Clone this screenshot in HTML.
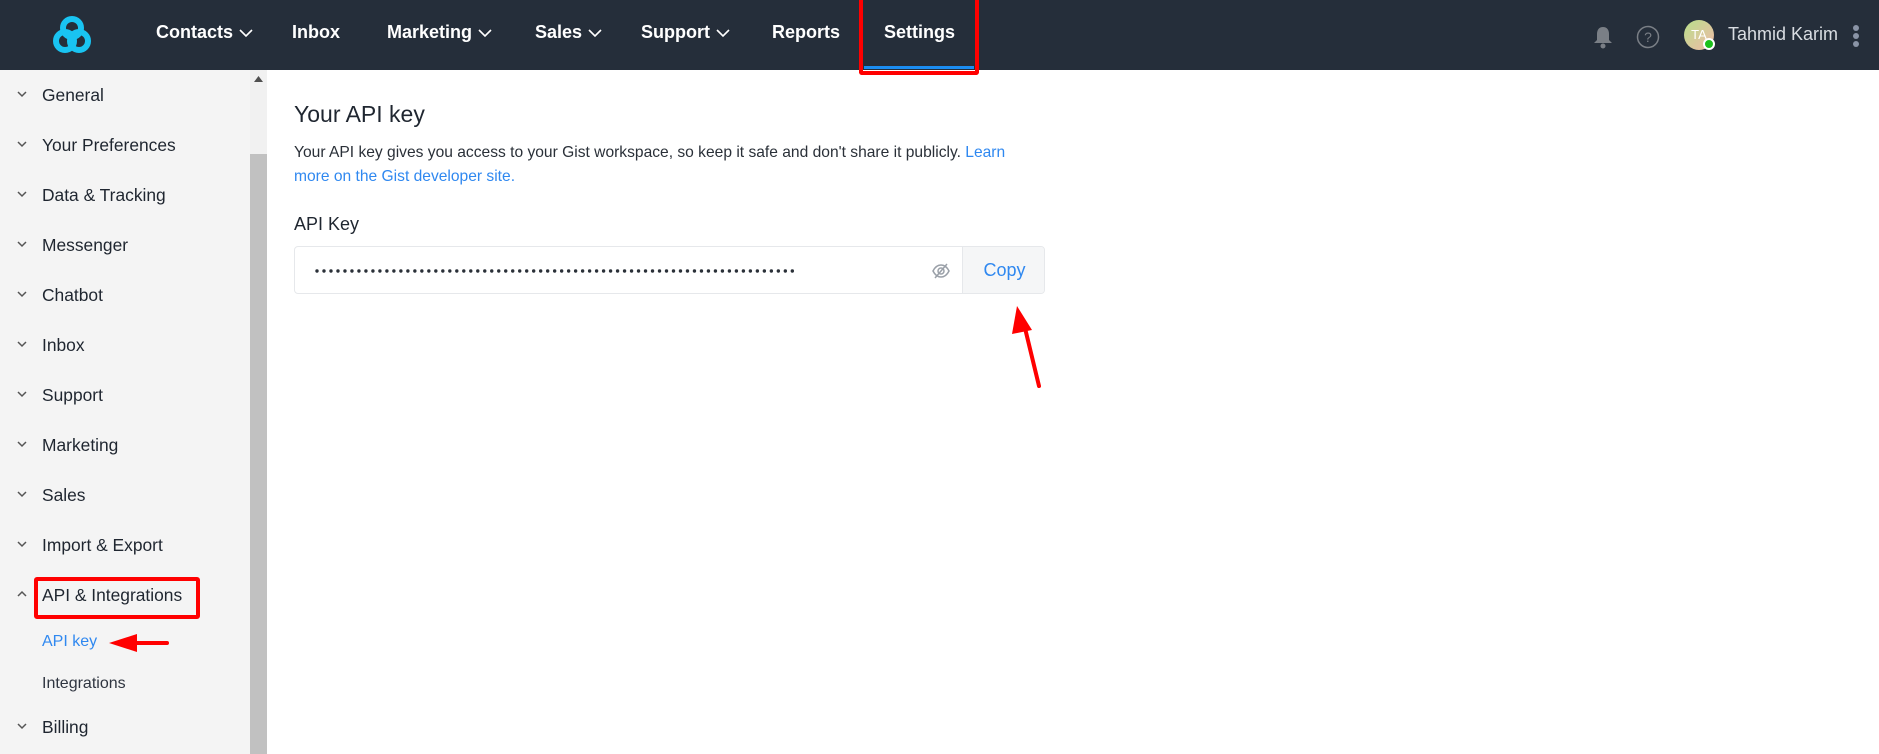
<!DOCTYPE html>
<html><head><meta charset="utf-8"><style>
*{margin:0;padding:0;box-sizing:border-box}
body{width:1879px;height:754px;overflow:hidden;background:#fff;font-family:"Liberation Sans",sans-serif;position:relative}
.nav{position:absolute;left:0;top:0;width:1879px;height:70px;background:#252e3a}
.ni{position:absolute;top:22px;color:#fff;font-size:18px;font-weight:bold;white-space:nowrap}
.ni svg{vertical-align:middle;margin-left:6px}
.side{position:absolute;left:0;top:70px;width:250px;height:684px;background:#f4f4f4}
.si{position:absolute;left:42px;font-size:17.4px;color:#1f2630;white-space:nowrap}
.sb{position:absolute;left:250px;top:70px;width:17px;height:684px;background:#f1f1f1}
.thumb{position:absolute;left:250px;top:154px;width:17px;height:600px;background:#c1c1c1}
</style></head><body>
<div class="nav">
<svg style="position:absolute;left:50px;top:14px" width="44" height="42" viewBox="0 0 44 42"><g fill="none" stroke="#19c4f2" stroke-width="6"><circle cx="22" cy="14" r="9"/><circle cx="15" cy="27" r="9"/><circle cx="29" cy="27" r="9"/></g></svg>
<div class="ni" style="left:156px">Contacts<svg width="14" height="9"><path d="M1 1l6 6 6-6" stroke="#fff" stroke-width="1.6" fill="none"/></svg></div>
<div class="ni" style="left:292px">Inbox</div>
<div class="ni" style="left:387px">Marketing<svg width="14" height="9"><path d="M1 1l6 6 6-6" stroke="#fff" stroke-width="1.6" fill="none"/></svg></div>
<div class="ni" style="left:535px">Sales<svg width="14" height="9"><path d="M1 1l6 6 6-6" stroke="#fff" stroke-width="1.6" fill="none"/></svg></div>
<div class="ni" style="left:641px">Support<svg width="14" height="9"><path d="M1 1l6 6 6-6" stroke="#fff" stroke-width="1.6" fill="none"/></svg></div>
<div class="ni" style="left:772px">Reports</div>
<div class="ni" style="left:884px">Settings</div>
<div style="position:absolute;left:864px;top:66px;width:110px;height:3px;background:#1b8df2"></div>
<div style="position:absolute;left:859px;top:0;width:120px;height:75px;border:4px solid #f00;border-top:0;border-radius:0 0 3px 3px"></div>
<svg style="position:absolute;left:1592px;top:25px" width="22" height="24" viewBox="0 0 22 24"><path d="M11 2c-4 0-6 3-6 7v6l-3 3h18l-3-3V9c0-4-2-7-6-7z" fill="#7a7f86"/><circle cx="11" cy="21" r="2.5" fill="#7a7f86"/></svg>
<svg style="position:absolute;left:1636px;top:25px" width="24" height="24"><circle cx="12" cy="12" r="10.5" fill="none" stroke="#7a7f86" stroke-width="1.5"/><text x="12" y="17" font-size="14" text-anchor="middle" fill="#7a7f86" font-family="Liberation Sans">?</text></svg>
<div style="position:absolute;left:1684px;top:20px;width:30px;height:30px;border-radius:50%;background:linear-gradient(135deg,#b8e08a,#f1b8a8);color:#fff;font-size:13px;line-height:30px;text-align:center">TA</div>
<div style="position:absolute;left:1703px;top:38px;width:12px;height:12px;border-radius:50%;background:#1bc01b;border:2px solid #fff"></div>
<div style="position:absolute;left:1728px;top:24px;color:#d9dde2;font-size:18px">Tahmid Karim</div>
<svg style="position:absolute;left:1852px;top:24px" width="8" height="24"><circle cx="4" cy="4" r="3" fill="#8a94a6"/><circle cx="4" cy="12" r="3" fill="#8a94a6"/><circle cx="4" cy="20" r="3" fill="#8a94a6"/></svg>
</div>
<div class="side">
<div class="si" style="top:15px">General</div>
<div class="si" style="top:65px">Your Preferences</div>
<div class="si" style="top:115px">Data &amp; Tracking</div>
<div class="si" style="top:165px">Messenger</div>
<div class="si" style="top:215px">Chatbot</div>
<div class="si" style="top:265px">Inbox</div>
<div class="si" style="top:315px">Support</div>
<div class="si" style="top:365px">Marketing</div>
<div class="si" style="top:415px">Sales</div>
<div class="si" style="top:465px">Import &amp; Export</div>
<div class="si" style="top:515px">API &amp; Integrations</div>
<div class="si" style="top:563px;font-size:16px;color:#2f88f0">API key</div>
<div class="si" style="top:605px;font-size:16px;color:#2f3540">Integrations</div>
<div class="si" style="top:647px">Billing</div>
<svg style="position:absolute;left:0;top:0" width="30" height="684">
<g fill="none" stroke="#555" stroke-width="1.5">
<path d="M18 22l4 4 4-4"/><path d="M18 72l4 4 4-4"/><path d="M18 122l4 4 4-4"/><path d="M18 172l4 4 4-4"/><path d="M18 222l4 4 4-4"/><path d="M18 272l4 4 4-4"/><path d="M18 322l4 4 4-4"/><path d="M18 372l4 4 4-4"/><path d="M18 422l4 4 4-4"/><path d="M18 472l4 4 4-4"/><path d="M18 526l4-4 4 4"/><path d="M18 654l4 4 4-4"/></g></svg>
<div style="position:absolute;left:34px;top:507px;width:166px;height:42px;border:4px solid #f00;border-radius:3px"></div>
<svg style="position:absolute;left:105px;top:562px" width="65" height="22"><path d="M28 11H62" stroke="#f00" stroke-width="4" stroke-linecap="round"/><path d="M4 11L32 2V20z" fill="#f00"/></svg>
</div>
<div class="sb"></div><div class="thumb"></div>
<svg style="position:absolute;left:254px;top:76px" width="9" height="6"><path d="M0 6L4.5 0 9 6z" fill="#505050"/></svg>
<div style="position:absolute;left:294px;top:101px;font-size:23px;color:#1f2630">Your API key</div>
<div style="position:absolute;left:294px;top:141px;width:740px;font-size:15.6px;line-height:24px;color:#2a3038">Your API key gives you access to your Gist workspace, so keep it safe and don't share it publicly. <span style="color:#2f88f0">Learn more on the Gist developer site.</span></div>
<div style="position:absolute;left:294px;top:214px;font-size:18px;color:#1f2630">API Key</div>
<div style="position:absolute;left:294px;top:246px;width:751px;height:48px;border:1px solid #e6e8eb;border-radius:4px;overflow:hidden">
<svg style="position:absolute;left:20px;top:21px" width="490" height="6"><line x1="2" y1="3" x2="484" y2="3" stroke="#2a3038" stroke-width="3.4" stroke-linecap="round" stroke-dasharray="0 6.99"/></svg>
<svg style="position:absolute;left:636px;top:14px" width="20" height="20" viewBox="0 0 20 20"><g fill="none" stroke="#9aa0a8" stroke-width="1.5"><path d="M2 10c2-4 5-6 8-6s6 2 8 6c-2 4-5 6-8 6s-6-2-8-6z"/><circle cx="10" cy="10" r="3"/><path d="M4 17L16 3"/></g></svg>
<div style="position:absolute;left:667px;top:0;width:84px;height:48px;background:#f5f6f7;border-left:1px solid #e6e8eb;color:#2f88f0;font-size:18px;line-height:46px;text-align:center">Copy</div>
</div>
<svg style="position:absolute;left:1005px;top:300px" width="45" height="90"><path d="M34 86L19 24" stroke="#f00" stroke-width="4" stroke-linecap="round"/><path d="M12 6L7 34 27 30z" fill="#f00"/></svg>
</body></html>
